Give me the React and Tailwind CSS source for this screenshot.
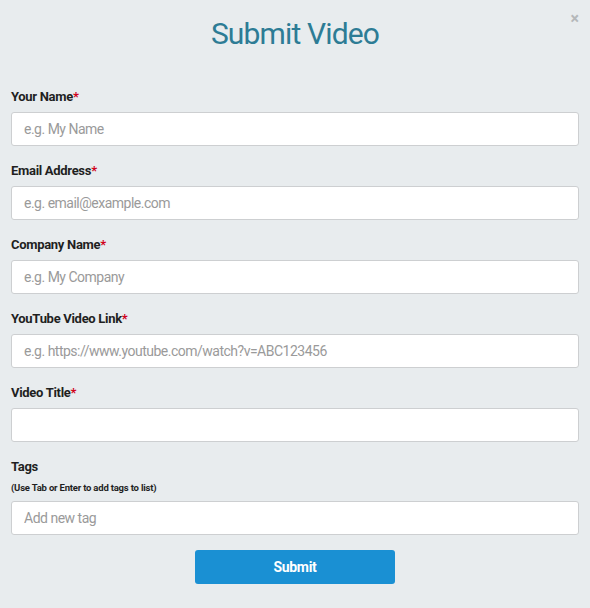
import React from 'react';

const fields = [
  { label: 'Your Name', placeholder: 'e.g. My Name' },
  { label: 'Email Address', placeholder: 'e.g. email@example.com' },
  { label: 'Company Name', placeholder: 'e.g. My Company' },
  { label: 'YouTube Video Link', placeholder: 'e.g. https://www.youtube.com/watch?v=ABC123456' },
  { label: 'Video Title', placeholder: '' },
];

const inputCls =
  'block w-full h-[34px] rounded-[3px] border border-[#cdcfd1] bg-white px-[12px] text-[14px] text-[#333] placeholder:text-[#9a9a9a] outline-none tracking-[-0.5px]';

export default function App() {
  return (
    <div
      className="relative min-h-[608px] w-full bg-[#e8ecee] px-[11px]"
      style={{ fontFamily: 'Roboto, "Liberation Sans", sans-serif' }}
    >
      {/* close */}
      <button className="absolute right-[11px] top-[10px] text-[16px] font-bold leading-[18px] text-[#b5b8ba]">
        ×
      </button>

      <h1 className="pt-[14px] text-center text-[30px] leading-[40px] text-[#2d7c95] tracking-[-0.85px]">
        Submit Video
      </h1>

      <form className="mt-[35px]" onSubmit={(e) => e.preventDefault()}>
        {fields.map((f) => (
          <div key={f.label} className="mb-[17px]">
            <label className="mb-[7px] block text-[13px] font-bold leading-[16px] text-[#1f1f1f] tracking-[-0.3px]">
              {f.label}
              <span className="text-[#d0021b]">*</span>
            </label>
            <input className={inputCls} placeholder={f.placeholder} />
          </div>
        ))}

        <div>
          <label className="block text-[13px] font-bold leading-[16px] text-[#1f1f1f] tracking-[-0.3px]">
            Tags
          </label>
          <p className="mt-[7px] mb-[7px] text-[9.5px] font-bold leading-[12px] text-[#1f1f1f] tracking-[-0.2px]">
            (Use Tab or Enter to add tags to list)
          </p>
          <input className={inputCls} placeholder="Add new tag" />
        </div>

        <div className="mt-[15px] flex justify-center">
          <button
            type="submit"
            className="h-[34px] w-[200px] rounded-[3px] bg-[#1a90d3] text-[14px] font-bold text-white tracking-[-0.3px]"
          >
            Submit
          </button>
        </div>
      </form>
    </div>
  );
}
